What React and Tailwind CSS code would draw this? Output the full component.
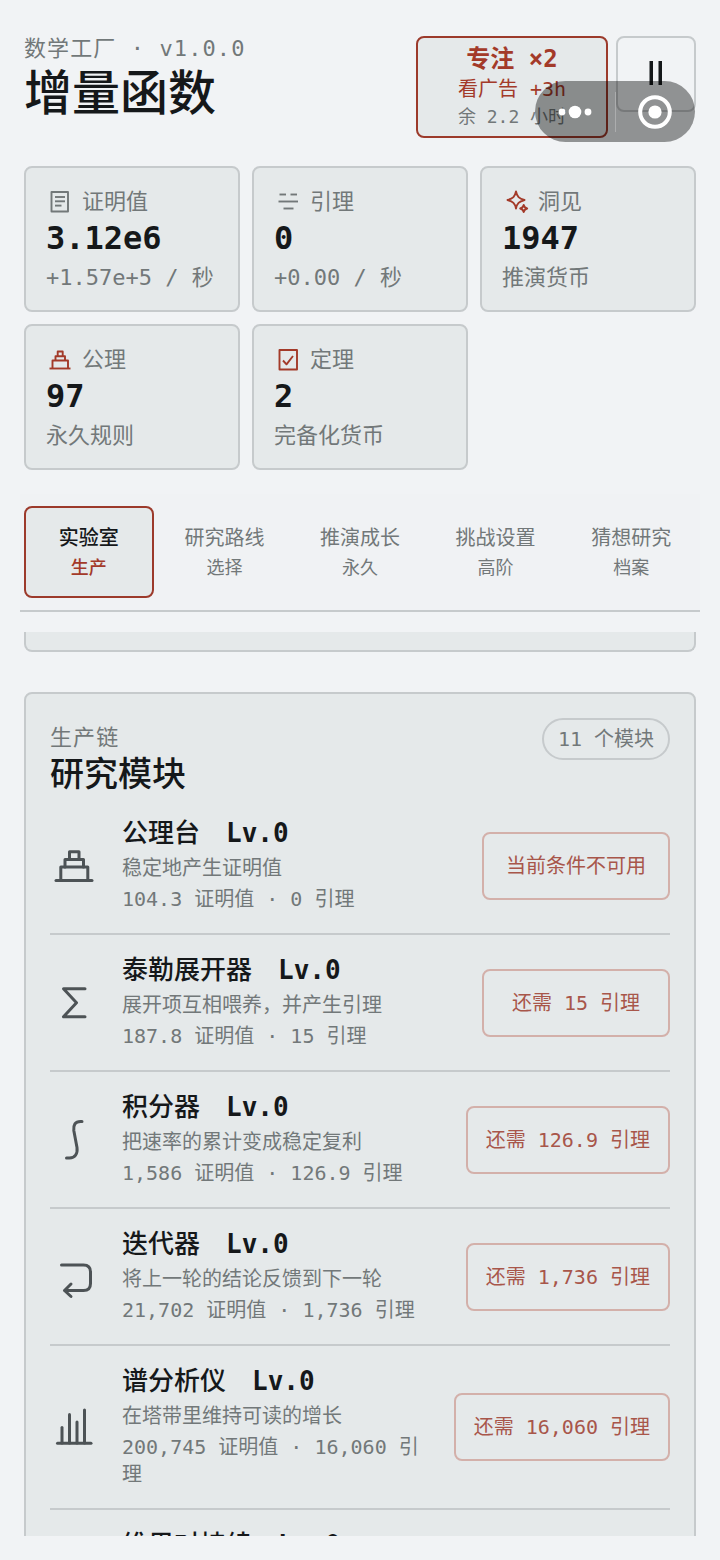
import { useState } from 'react';

const stats = [
  { icon: 'proof', label: '证明值', value: '3.12e6', note: '+1.57e+5 / 秒' },
  { icon: 'lemma', label: '引理', value: '0', note: '+0.00 / 秒' },
  { icon: 'insight', label: '洞见', value: '1947', note: '推演货币', accent: true },
  { icon: 'axiom', label: '公理', value: '97', note: '永久规则', accent: true },
  { icon: 'theorem', label: '定理', value: '2', note: '完备化货币', accent: true },
];

const tabs = [
  { id: 'lab', title: '实验室', sub: '生产' },
  { id: 'route', title: '研究路线', sub: '选择' },
  { id: 'growth', title: '推演成长', sub: '永久' },
  { id: 'challenge', title: '挑战设置', sub: '高阶' },
  { id: 'conjecture', title: '猜想研究', sub: '档案' },
];

const modules = [
  { icon: 'table', name: '公理台', desc: '稳定地产生证明值', cost: '104.3 证明值 · 0 引理', action: '当前条件不可用' },
  { icon: 'sigma', name: '泰勒展开器', desc: '展开项互相喂养，并产生引理', cost: '187.8 证明值 · 15 引理', action: '还需 15 引理' },
  { icon: 'integral', name: '积分器', desc: '把速率的累计变成稳定复利', cost: '1,586 证明值 · 126.9 引理', action: '还需 126.9 引理' },
  { icon: 'loop', name: '迭代器', desc: '将上一轮的结论反馈到下一轮', cost: '21,702 证明值 · 1,736 引理', action: '还需 1,736 引理' },
  { icon: 'spectrum', name: '谱分析仪', desc: '在塔带里维持可读的增长', cost: '200,745 证明值 · 16,060 引理', action: '还需 16,060 引理' },
  { icon: 'sigma', name: '维里对持续', desc: '', cost: '', action: '' },
];

const statPaths = {
  proof: ['M5.5 4h16.5v19.5H5.5z', 'M9 9h10', 'M9 13.3h10', 'M9 17.6h6.5'],
  lemma: ['M5.5 6.5h6.5', 'M16.5 6.5h6.5', 'M4.500 13.5h19.500', 'M9.500 20.5h10'],
  insight: [
    'M14 3.5c1 5 3 7 8.5 8.5c-5.500 1.500-7.500 3.500-8.500 8.500c-1-5-3-7-8.500-8.500c5.500-1.500 7.500-3.500 8.500-8.500z',
    'M21.700 17c.5 2.200 1.300 3 3.500 3.500c-2.200.5-3 1.300-3.500 3.500c-.5-2.200-1.300-3-3.500-3.500c2.200-.5 3-1.300 3.500-3.500z',
  ],
  axiom: ['M3.500 22.500h21', 'M6.500 22.500v-8h15.500v8', 'M9.500 14.500V10.200h9.500v4.300', 'M11.700 10.200V5.500h5v4.700'],
  theorem: ['M5.500 4h17.500v19.500H5.500z', 'M9 14.500l3.500 3.800l6.500-8.300'],
};

const modulePaths = {
  table: ['M6 38.500h36', 'M10.800 38.500V25h27v13.500', 'M15 25v-7.500h18.500V25', 'M19.500 17.500V9.700h9.500v7.800'],
  sigma: ['M35 9.700H13.500L26.500 23.700L13.500 37.800H35'],
  integral: ['M32 5.500h-1.500c-5.500 0-7.200 3.500-6.700 9l3.200 17c.8 6.500-2 10.500-7.500 10.500H16.500'],
  loop: ['M11.500 12H33.500q7 0 7 7v11.500q0 7-7 7H15', 'M21 31l-6.500 6.500l6.500 6'],
  spectrum: ['M7.500 40.200h33.500', 'M12 40V24.500', 'M19.500 40V11.500', 'M27 40V19', 'M34.500 40V7'],
};

function StatIcon({ name }) {
  return (
    <svg className="size-7 shrink-0" viewBox="0 0 28 28" fill="none" stroke="currentColor" strokeWidth="1.9" strokeLinejoin="round" aria-hidden="true">
      {statPaths[name].map((d) => (
        <path key={d} d={d} />
      ))}
    </svg>
  );
}

function ModuleIcon({ name }) {
  return (
    <svg className="size-12 shrink-0 text-[#4d5356]" viewBox="0 0 48 48" fill="none" stroke="currentColor" strokeWidth="3" strokeLinecap="round" strokeLinejoin="round" aria-hidden="true">
      {modulePaths[name].map((d) => (
        <path key={d} d={d} />
      ))}
    </svg>
  );
}

function StatCard({ icon, label, value, note, accent }) {
  return (
    <div className="rounded-lg border-2 border-[#c6cacc] bg-[#e5e9ea] px-5 pt-[18px] pb-3">
      <div className={accent ? 'flex items-center gap-2 text-[#a33a29]' : 'flex items-center gap-2 text-[#727879]'}>
        <StatIcon name={icon} />
        <span className="text-[22px] leading-8 text-[#727879]">{label}</span>
      </div>
      <div className="text-[32px] leading-10 font-bold text-[#15181a]">{value}</div>
      <div className="text-[22px] leading-10 whitespace-nowrap text-[#727879]">{note}</div>
    </div>
  );
}

function ModuleRow({ icon, name, desc, cost, action }) {
  return (
    <li className="flex items-center gap-6 border-b-2 border-[#c6cacc] py-[18px]">
      <ModuleIcon name={icon} />
      <div className="min-w-0 flex-1 pb-[2px]">
        <h3 className="flex gap-[26px] text-[26px] leading-[34px] font-medium text-[#15181a]">
          {name}
          <span className="font-bold">Lv.0</span>
        </h3>
        <p className="min-h-9 text-xl leading-9 text-[#727879]">{desc}</p>
        <p className="min-h-[27px] text-xl leading-[27px] text-[#727879]">{cost}</p>
      </div>
      {action && (
        <button type="button" disabled className="h-[68px] min-w-[188px] shrink-0 rounded-lg border-2 border-[#d3b0aa] px-[18px] text-xl text-[#a8564a]">
          {action}
        </button>
      )}
    </li>
  );
}

// Floating host-app capsule: menu + close
function Capsule() {
  return (
    <div className="absolute top-[81px] right-[25px] flex h-[61px] w-40 items-center rounded-full bg-black/40">
      <button type="button" aria-label="更多" className="flex h-full flex-1 items-center justify-center">
        <svg className="h-4 w-9" viewBox="0 0 36 16" fill="#fff">
          <circle cx="5" cy="8" r="3.400" />
          <circle cx="18" cy="8" r="6.300" />
          <circle cx="31" cy="8" r="3.400" />
        </svg>
      </button>
      <span className="h-10 w-px bg-white/25" />
      <button type="button" aria-label="关闭" className="flex h-full flex-1 items-center justify-center">
        <svg className="size-9" viewBox="0 0 36 36" fill="none">
          <circle cx="18" cy="18" r="14.800" stroke="#fff" strokeWidth="4" />
          <circle cx="18" cy="18" r="6.600" fill="#fff" />
        </svg>
      </button>
    </div>
  );
}

export default function App() {
  const [active, setActive] = useState('lab');

  return (
    <div className="relative flex h-screen flex-col overflow-hidden bg-[#f1f3f5] px-6 pt-9 pb-6 font-['DejaVu_Sans_Mono','Noto_Sans_CJK_SC',monospace] text-[#15181a]">
      <header className="flex items-start gap-2">
        <div className="flex-1">
          <p className="text-[22px] leading-[26px] tracking-wider text-[#727879]">数学工厂 · v1.0.0</p>
          <h1 className="text-5xl leading-[62px] font-medium">增量函数</h1>
        </div>
        <button type="button" className="flex h-[102px] w-48 flex-col items-center justify-center rounded-lg border-2 border-[#9c3a2b] bg-[#e5e9ea] text-[#a33a29]">
          <span className="text-2xl leading-8 font-bold">专注 ×2</span>
          <span className="text-xl leading-7">看广告 +3h</span>
          <span className="text-lg leading-7 text-[#727879]">余 2.2 小时</span>
        </button>
        <button type="button" aria-label="暂停" className="flex h-[76px] w-20 items-center justify-center rounded-lg border-2 border-[#c6cacc]">
          <svg className="size-7" viewBox="0 0 28 28" fill="#15181a">
            <rect x="7.500" y="1" width="3.500" height="24" />
            <rect x="16.500" y="1" width="3.500" height="24" />
          </svg>
        </button>
      </header>

      <section className="mt-7 grid grid-cols-3 gap-3">
        {stats.map((s) => (
          <StatCard key={s.icon} {...s} />
        ))}
      </section>

      <nav className="-mx-1 mt-6 flex gap-[6px] border-b-2 border-[#c6cacc] bg-[#f0f2f4] px-1 py-3">
        {tabs.map((t) => {
          const on = t.id === active;
          return (
            <button
              key={t.id}
              type="button"
              onClick={() => setActive(t.id)}
              className={
                on
                  ? 'flex h-[92px] flex-1 flex-col items-center justify-center rounded-lg border-2 border-[#9c3a2b] bg-[#e5e9ea] text-[#15181a]'
                  : 'flex h-[92px] flex-1 flex-col items-center justify-center rounded-lg border-2 border-transparent text-[#727879]'
              }
            >
              <span className={on ? 'text-xl leading-8 font-medium' : 'text-xl leading-8'}>{t.title}</span>
              <span className={on ? 'text-lg leading-7 font-medium text-[#a33a29]' : 'text-lg leading-7'}>{t.sub}</span>
            </button>
          );
        })}
      </nav>

      <main className="mt-5 min-h-0 flex-1 overflow-hidden">
        <div className="h-5 rounded-b-lg border-2 border-t-0 border-[#c6cacc] bg-[#e5e9ea]" />
        <section className="mt-10 rounded-lg border-2 border-[#c6cacc] bg-[#e5e9ea] p-6">
          <div className="flex items-start justify-between">
            <div>
              <p className="text-[22px] leading-10 tracking-wider text-[#727879]">生产链</p>
              <h2 className="text-[34px] leading-8 font-medium">研究模块</h2>
            </div>
            <span className="rounded-full border-2 border-[#c6cacc] px-[14px] py-[3px] text-xl leading-8 text-[#727879]">11 个模块</span>
          </div>
          <ul className="mt-2">
            {modules.map((m) => (
              <ModuleRow key={m.name} {...m} />
            ))}
          </ul>
        </section>
      </main>

      <Capsule />
    </div>
  );
}
